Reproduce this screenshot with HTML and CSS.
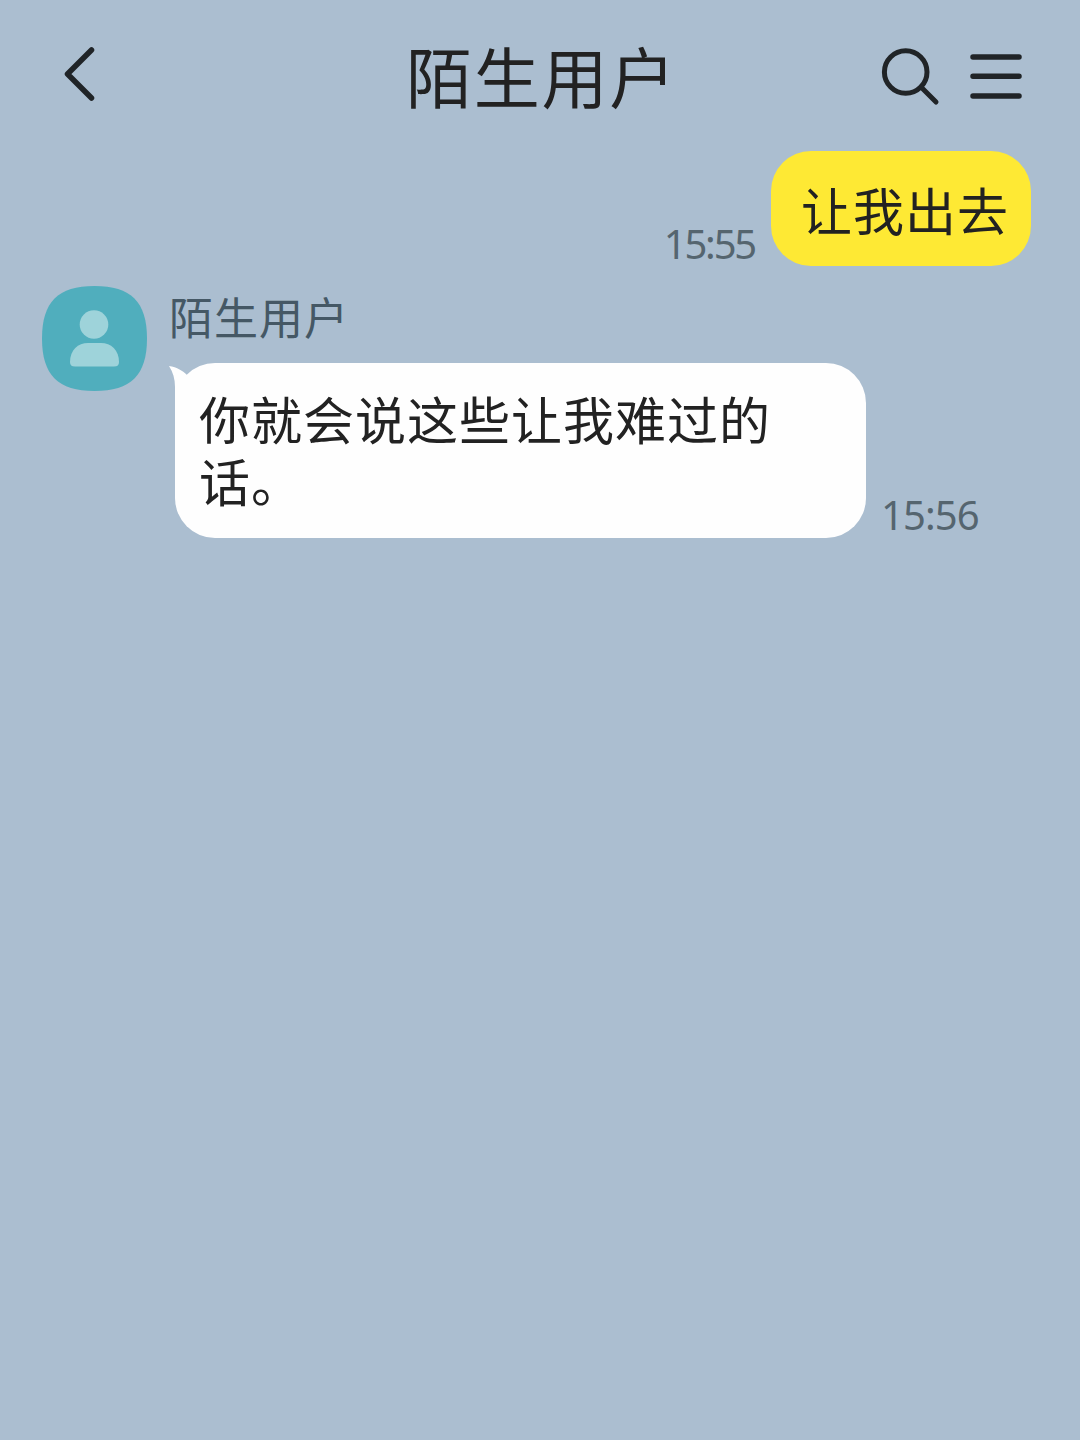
FILE: index.html
```
<!DOCTYPE html>
<html lang="zh-CN">
<head>
  <meta charset="UTF-8">
  <meta name="viewport" content="width=device-width, initial-scale=1.0">
  <title>陌生用户</title>
  <link rel="stylesheet" href="styles.css">
</head>
<body>
  <div class="chat">
    <!-- Top bar -->
    <header class="chat-header">
      <div class="header-left">
        <svg class="icon-back" width="32" height="56" viewBox="0 0 32 56">
          <path d="M28.5 4L4.5 28L28.5 52"/>
        </svg>
      </div>
      <h1>陌生用户</h1>
      <div class="header-right">
        <svg class="icon-search" width="60" height="60" viewBox="0 0 60 60">
          <circle cx="25.7" cy="26" r="21.3"/>
          <path d="M41 41L56 56"/>
        </svg>
        <svg class="icon-menu" width="52" height="46" viewBox="0 0 52 46">
          <path d="M3 4H49M3 23.3H49M3 43H49"/>
        </svg>
      </div>
    </header>

    <!-- Messages -->
    <main class="messages">
      <div class="message sent">
        <span class="time">15:55</span>
        <p class="bubble">让我出去</p>
      </div>

      <div class="message received">
        <svg class="avatar" width="105" height="105" viewBox="0 0 105 105">
          <path class="avatar-bg" d="M52.5 0C89 0 105 16 105 52.5C105 89 89 105 52.5 105C16 105 0 89 0 52.5C0 16 16 0 52.5 0Z"/>
          <circle class="avatar-person" cx="52" cy="38.5" r="14.3"/>
          <path class="avatar-person" d="M28 76C28 64 36 57 46 57H59C69 57 77 64 77 76C77 79 75.5 80.5 72 80.5H33C29.5 80.5 28 79 28 76Z"/>
        </svg>
        <div class="content">
          <h2>陌生用户</h2>
          <div class="row">
            <p class="bubble">
              <svg class="tail" width="26" height="40" viewBox="0 0 26 40">
                <path d="M0 1C8 2 14 6 18 10L26 20L6 40V22C6 14 4 7 0 1Z"/>
              </svg>
              你就会说这些让我难过的话。
            </p>
            <span class="time">15:56</span>
          </div>
        </div>
      </div>
    </main>
  </div>
</body>
</html>
```
FILE: styles.css
```
/* General reset */
* {
  margin: 0;
  padding: 0;
  box-sizing: border-box;
}

body {
  font-family: 'Noto Sans CJK SC', sans-serif;
  background-color: #abbed0;
  color: #222;
}

.chat {
  min-height: 100vh;
}

/* Top bar */
.chat-header {
  display: grid;
  grid-template-columns: 1fr auto 1fr;
  align-items: center;
  height: 151px;
  padding: 0 58px 0 63px;
}

.header-left {
  display: flex;
  padding-bottom: 3px;
}

.chat-header h1 {
  padding-bottom: 3px;
  margin-left: -2px;
  font-size: 66px;
  font-weight: 400;
  letter-spacing: 1.8px;
  line-height: 90px;
}

.header-right {
  display: flex;
  justify-content: flex-end;
  align-items: center;
  gap: 30px;
}

.icon-back,
.icon-search,
.icon-menu {
  fill: none;
  stroke: #202427;
  stroke-width: 5.5;
  stroke-linecap: round;
  stroke-linejoin: round;
}

.icon-search {
  stroke-width: 5;
}

/* Messages */
.message {
  display: flex;
}

.bubble {
  border-radius: 40px;
  font-size: 51px;
  letter-spacing: 1px;
  line-height: 62px;
}

.time {
  font-family: 'Noto Sans', sans-serif;
  font-size: 40px;
  letter-spacing: -0.9px;
  line-height: 44px;
  color: #55656f;
}

.sent {
  justify-content: flex-end;
  align-items: flex-end;
  gap: 17px;
  padding-right: 49px;
}

.sent .time {
  letter-spacing: -2.2px;
  margin-right: -1px;
}

.sent .bubble {
  width: 260px;
  height: 115px;
  padding: 27px 0 0 30px;
  background-color: #fee934;
}

.received {
  gap: 28px;
  margin-top: 20px;
  padding-left: 42px;
}

.received .time {
  padding-bottom: 1px;
}

.avatar-bg {
  fill: #50aebd;
}

.avatar-person {
  fill: #9ed3da;
}

.received h2 {
  height: 77px;
  margin-left: -6px;
  font-size: 44px;
  font-weight: 400;
  letter-spacing: 1px;
  line-height: 61px;
  color: #455865;
}

.row {
  display: flex;
  align-items: flex-end;
  gap: 15px;
}

.received .bubble {
  position: relative;
  width: 691px;
  height: 175px;
  padding: 24px 80px 0 24px;
  background-color: #fefefe;
}

/* Corner tail of the incoming bubble */
.tail {
  position: absolute;
  top: 2px;
  left: -6px;
  fill: #fefefe;
}
```
